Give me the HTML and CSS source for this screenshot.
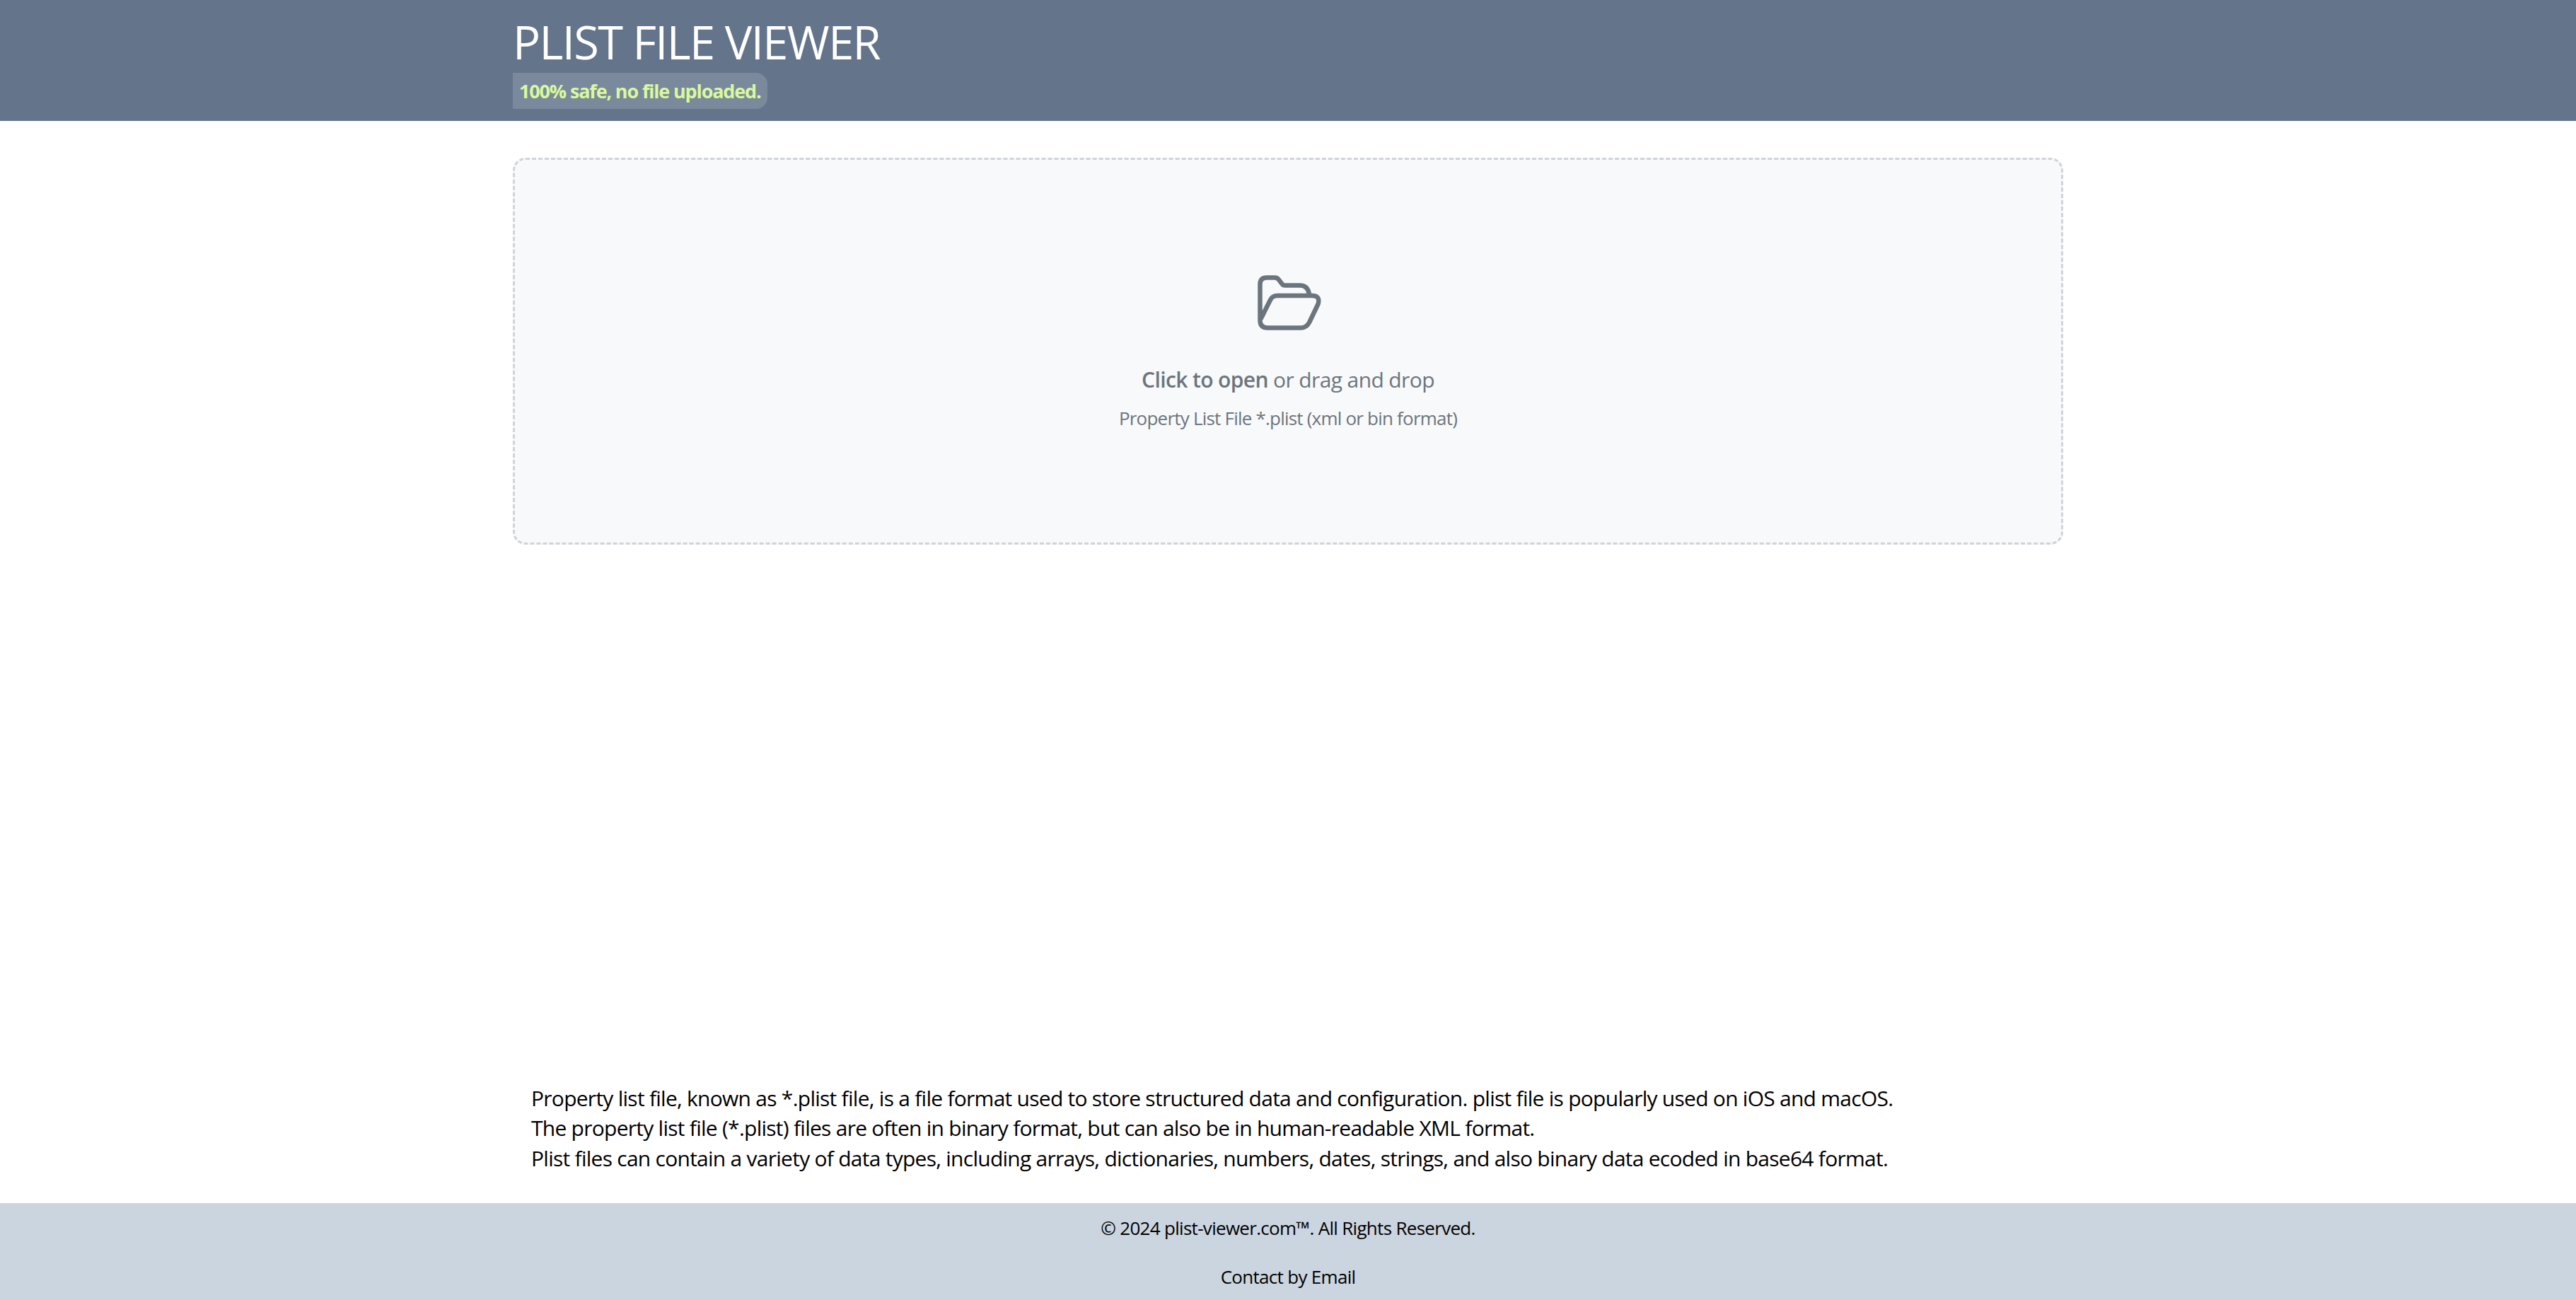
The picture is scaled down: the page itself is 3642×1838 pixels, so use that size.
FILE: index.html
```html
<!DOCTYPE html>
<html lang="en">
<head>
    <meta charset="UTF-8">
    <meta name="viewport" content="width=device-width, initial-scale=1.0">
    <title>Plist File Viewer</title>
    <link rel="stylesheet" href="styles.css">
</head>
<body>

<header class="site-header">
    <div class="container">
        <h1 class="site-title">PLIST FILE VIEWER</h1>
        <span class="safe-badge">100% safe, no file uploaded.</span>
    </div>
</header>

<main class="container main">
    <label class="dropzone">
        <svg class="folder-icon" viewBox="0 0 90 78" fill="none" stroke="currentColor" stroke-width="6.5" stroke-linecap="round" stroke-linejoin="round">
            <path d="M5 61 L18 35 Q21 29 28 29 H77 Q89 29 85.500 41 L73 67 Q69 74.500 61 74.500 H14 Q3.500 74.500 3.500 64 V13 Q3.500 3.500 13 3.500 H24 Q28 3.500 30 6.500 L35 13 Q36 14.500 39 14.500 H60 Q71 14.500 73 27"/>
        </svg>
        <p class="drop-title"><strong>Click to open</strong> or drag and drop</p>
        <p class="drop-hint">Property List File *.plist (xml or bin format)</p>
    </label>

    <section class="about">
        Property list file, known as *.plist file, is a file format used to store structured data and configuration. plist file is popularly used on iOS and macOS.<br>
        The property list file (*.plist) files are often in binary format, but can also be in human-readable XML format.<br>
        Plist files can contain a variety of data types, including arrays, dictionaries, numbers, dates, strings, and also binary data ecoded in base64 format.
    </section>
</main>

<footer class="site-footer">
    <p>© 2024 plist-viewer.com™. All Rights Reserved.</p>
    <p><a href="#">Contact by Email</a></p>
</footer>

</body>
</html>
```

FILE: styles.css
```css
body {
    font-family: "Open Sans", "Noto Sans", sans-serif;
    display: flex;
    flex-direction: column;
    min-height: 1838px;
    margin: 0;
    background-color: #ffffff;
    color: #000000;
}
p {
    margin: 0;
}
.container {
    width: 2192px;
    margin: 0 auto;
}
.site-header {
    height: 171px;
    background-color: #64748b;
}
.site-title {
    margin: 0;
    padding-top: 16px;
    height: 87px;
    font-size: 65px;
    line-height: 87px;
    font-weight: 400;
    color: #ffffff;
    letter-spacing: -1.67px;
}
.safe-badge {
    display: inline-block;
    height: 51px;
    line-height: 51px;
    padding: 0 9px;
    font-size: 27px;
    font-weight: 700;
    letter-spacing: -1.15px;
    color: #d9f99d;
    background-color: #7a899c;
    border-radius: 0 16px 16px 0;
}
.main {
    flex: 1;
    display: flex;
    flex-direction: column;
    justify-content: space-between;
    padding-top: 52px;
    box-sizing: border-box;
}
.dropzone {
    display: flex;
    flex-direction: column;
    align-items: center;
    box-sizing: border-box;
    height: 547px;
    padding-top: 163px;
    background-color: #f8f9fa;
    border: 3px dashed #ced4da;
    border-radius: 18px;
    color: #6c757d;
    cursor: pointer;
}
.folder-icon {
    width: 90px;
    height: 78px;
    margin-bottom: 48px;
    margin-left: 3px;
}
.drop-title {
    font-size: 30px;
    line-height: 43px;
    letter-spacing: -0.62px;
}
.drop-title strong {
    font-weight: 600;
}
.drop-hint {
    margin-top: 15px;
    font-size: 26px;
    line-height: 37px;
    letter-spacing: -0.79px;
}
.about {
    padding: 0 26px;
    margin-bottom: 42px;
    font-size: 30px;
    line-height: 42.500px;
    letter-spacing: -0.74px;
}
.site-footer {
    height: 137px;
    box-sizing: border-box;
    padding-top: 17px;
    background-color: #cbd5e0;
    text-align: center;
    font-size: 26px;
    line-height: 37px;
    letter-spacing: -0.7px;
}
.site-footer p + p {
    margin-top: 32px;
}
.site-footer a {
    color: #000000;
    text-decoration: none;
}
```
